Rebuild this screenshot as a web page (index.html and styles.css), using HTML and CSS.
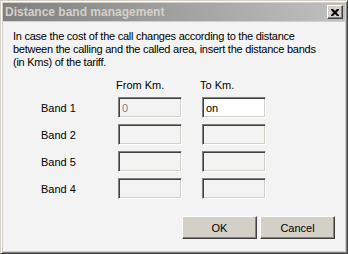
FILE: index.html
```html
<!DOCTYPE html>
<html lang="en">
<head>
    <meta charset="UTF-8">
    <title>Distance band management</title>
    <link rel="stylesheet" href="styles.css">
</head>
<body>
    <div class="window">
        <div class="title-bar">
            <span class="title">Distance band management</span>
            <button class="close-button">
                <svg width="8" height="7" viewBox="0 0 8 7">
                    <path d="M0 0h2l2 2 2-2h2v1l-2.5 2.5 2.5 2.5v1h-2l-2-2-2 2h-2v-1l2.5-2.5-2.5-2.5z" fill="#000"/>
                </svg>
            </button>
        </div>
        <div class="client">
            <p class="intro">In case the cost of the call changes according to the distance<br>between the calling and the called area, insert the distance bands<br>(in Kms) of the tariff.</p>
            <div class="bands">
                <span></span>
                <span class="col-head">From Km.</span>
                <span class="col-head">To Km.</span>

                <span class="band-label">Band 1</span>
                <input class="field" type="text" value="0" disabled>
                <input class="field" type="text" value="on">

                <span class="band-label">Band 2</span>
                <input class="field" type="text" disabled>
                <input class="field" type="text" disabled>

                <span class="band-label">Band 5</span>
                <input class="field" type="text" disabled>
                <input class="field" type="text" disabled>

                <span class="band-label">Band 4</span>
                <input class="field" type="text" disabled>
                <input class="field" type="text" disabled>
            </div>
            <div class="buttons">
                <button class="push-button">OK</button>
                <button class="push-button">Cancel</button>
            </div>
        </div>
    </div>
</body>
</html>
```
FILE: styles.css
```css
body {
    margin: 0;
    padding: 0;
    font-family: "Liberation Sans", Arial, sans-serif;
    font-size: 11px;
    color: #000;
    background: #fff;
}
.window {
    width: 348px;
    height: 254px;
    box-sizing: border-box;
    border: 1px solid;
    border-color: #d4d0c8 #404040 #404040 #d4d0c8;
    box-shadow: inset 1px 1px #fff, inset -1px -1px #808080;
    background: #d4d0c8;
    padding: 2px;
    display: flex;
    flex-direction: column;
}
.title-bar {
    height: 18px;
    background: linear-gradient(to right, #808080, #c0c0c0);
    display: flex;
    align-items: center;
    justify-content: space-between;
    padding: 0 2px 0 2px;
}
.title {
    color: #d4d0c8;
    font-weight: bold;
    font-size: 12px;
}
.close-button {
    width: 16px;
    height: 14px;
    padding: 0;
    background: #d4d0c8;
    border: 1px solid;
    border-color: #fff #404040 #404040 #fff;
    box-shadow: inset -1px -1px #808080;
    display: flex;
    align-items: center;
    justify-content: center;
}
.client {
    flex: 1;
    background: #f3f3f3;
    margin-top: 1px;
    padding: 8px 10px 0 10px;
    display: flex;
    flex-direction: column;
}
.intro {
    margin: 0;
    line-height: 13px;
    letter-spacing: -0.25px;
    white-space: nowrap;
}
.bands {
    display: grid;
    grid-template-columns: 57px 64px 64px;
    column-gap: 20px;
    row-gap: 6px;
    margin: 10px 0 0 28px;
}
.col-head {
    margin-left: -2px;
}
.band-label {
    align-self: center;
}
.field {
    width: 64px;
    height: 21px;
    box-sizing: border-box;
    margin: 0;
    padding: 0 3px;
    border: 1px solid;
    border-color: #808080 #fff #fff #808080;
    box-shadow: inset 1px 1px #404040, inset -1px -1px #d4d0c8;
    background: #fff;
    font-family: "Liberation Sans", Arial, sans-serif;
    font-size: 11px;
    color: #000;
    outline: none;
}
.field:disabled {
    background: #f3f3f3;
    color: #808080;
}
.buttons {
    display: flex;
    justify-content: flex-end;
    gap: 3px;
    margin-top: 17px;
}
.push-button {
    width: 75px;
    height: 23px;
    padding: 0;
    background: #d4d0c8;
    border: 1px solid;
    border-color: #fff #404040 #404040 #fff;
    box-shadow: inset -1px -1px #808080;
    font-family: "Liberation Sans", Arial, sans-serif;
    font-size: 11px;
    color: #000;
}
```
